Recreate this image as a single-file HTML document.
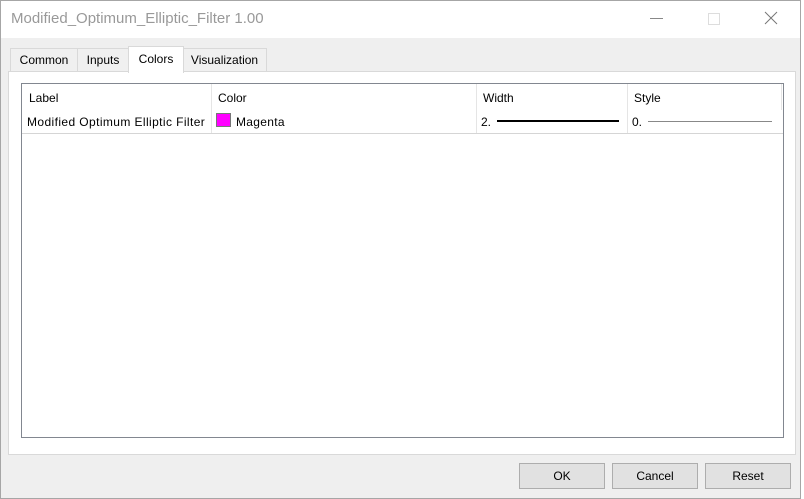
<html><head><style>
body{margin:0;width:804px;height:499px;background:#fff;font-family:"Liberation Sans",sans-serif;font-size:12px;color:#000;position:relative;overflow:hidden}
.a{position:absolute}
.btn{position:absolute;top:463px;width:84px;height:24px;background:#e1e1e1;border:1px solid #adadad;text-align:center;line-height:24px;font-size:12px}
.tab{position:absolute;top:48px;height:22px;background:#f0f0f0;border:1px solid #d9d9d9;border-bottom:none;line-height:23px;text-align:center}
</style></head><body>
<div class="a" style="left:0;top:0;width:799px;height:497px;border:1px solid #a6a6a6;background:#efefef"></div>
<div class="a" style="left:1px;top:1px;width:799px;height:37px;background:#fff"></div>
<div class="a" style="left:11px;top:10px;font-size:15px;color:#999">Modified_Optimum_Elliptic_Filter 1.00</div>
<div class="a" style="left:650px;top:18px;width:13px;height:1px;background:#888"></div>
<div class="a" style="left:708px;top:13px;width:10px;height:10px;border:1px solid #ddd"></div>
<svg class="a" style="left:764px;top:11px" width="14" height="14"><path d="M1 1L13 13M13 1L1 13" stroke="#777" stroke-width="1"/></svg>
<div class="a" style="left:8px;top:71px;width:786px;height:382px;background:#fff;border:1px solid #d9d9d9"></div>
<div class="tab" style="left:10px;width:66px">Common</div>
<div class="tab" style="left:77px;width:50px">Inputs</div>
<div class="tab" style="left:182px;width:83px">Visualization</div>
<div class="tab" style="left:128px;top:46px;height:26px;width:54px;background:#fff;line-height:24px">Colors</div>
<div class="a" style="left:21px;top:83px;width:761px;height:353px;border:1px solid #828790;background:#fff"></div>
<div class="a" style="left:22px;top:133px;width:761px;height:1px;background:#d5d5d5"></div>
<div class="a" style="left:211px;top:84px;width:1px;height:49px;background:#e5e5e5"></div>
<div class="a" style="left:476px;top:84px;width:1px;height:49px;background:#e5e5e5"></div>
<div class="a" style="left:627px;top:84px;width:1px;height:49px;background:#e5e5e5"></div>
<div class="a" style="left:781px;top:84px;width:1px;height:26px;background:#e5e5e5"></div>
<div class="a" style="left:29px;top:91px">Label</div>
<div class="a" style="left:218px;top:91px">Color</div>
<div class="a" style="left:483px;top:91px">Width</div>
<div class="a" style="left:634px;top:91px">Style</div>
<div class="a" style="left:27px;top:115px;letter-spacing:0.4px">Modified Optimum Elliptic Filter</div>
<div class="a" style="left:216px;top:113px;width:15px;height:14px;background:#f0f;border:1px solid #777;box-sizing:border-box"></div>
<div class="a" style="left:236px;top:115px;letter-spacing:0.3px">Magenta</div>
<div class="a" style="left:481px;top:115px">2.</div>
<div class="a" style="left:497px;top:120px;width:122px;height:2px;background:#000"></div>
<div class="a" style="left:632px;top:115px">0.</div>
<div class="a" style="left:648px;top:121px;width:124px;height:1px;background:#888"></div>
<div class="btn" style="left:519px">OK</div>
<div class="btn" style="left:612px">Cancel</div>
<div class="btn" style="left:705px">Reset</div>
</body></html>
